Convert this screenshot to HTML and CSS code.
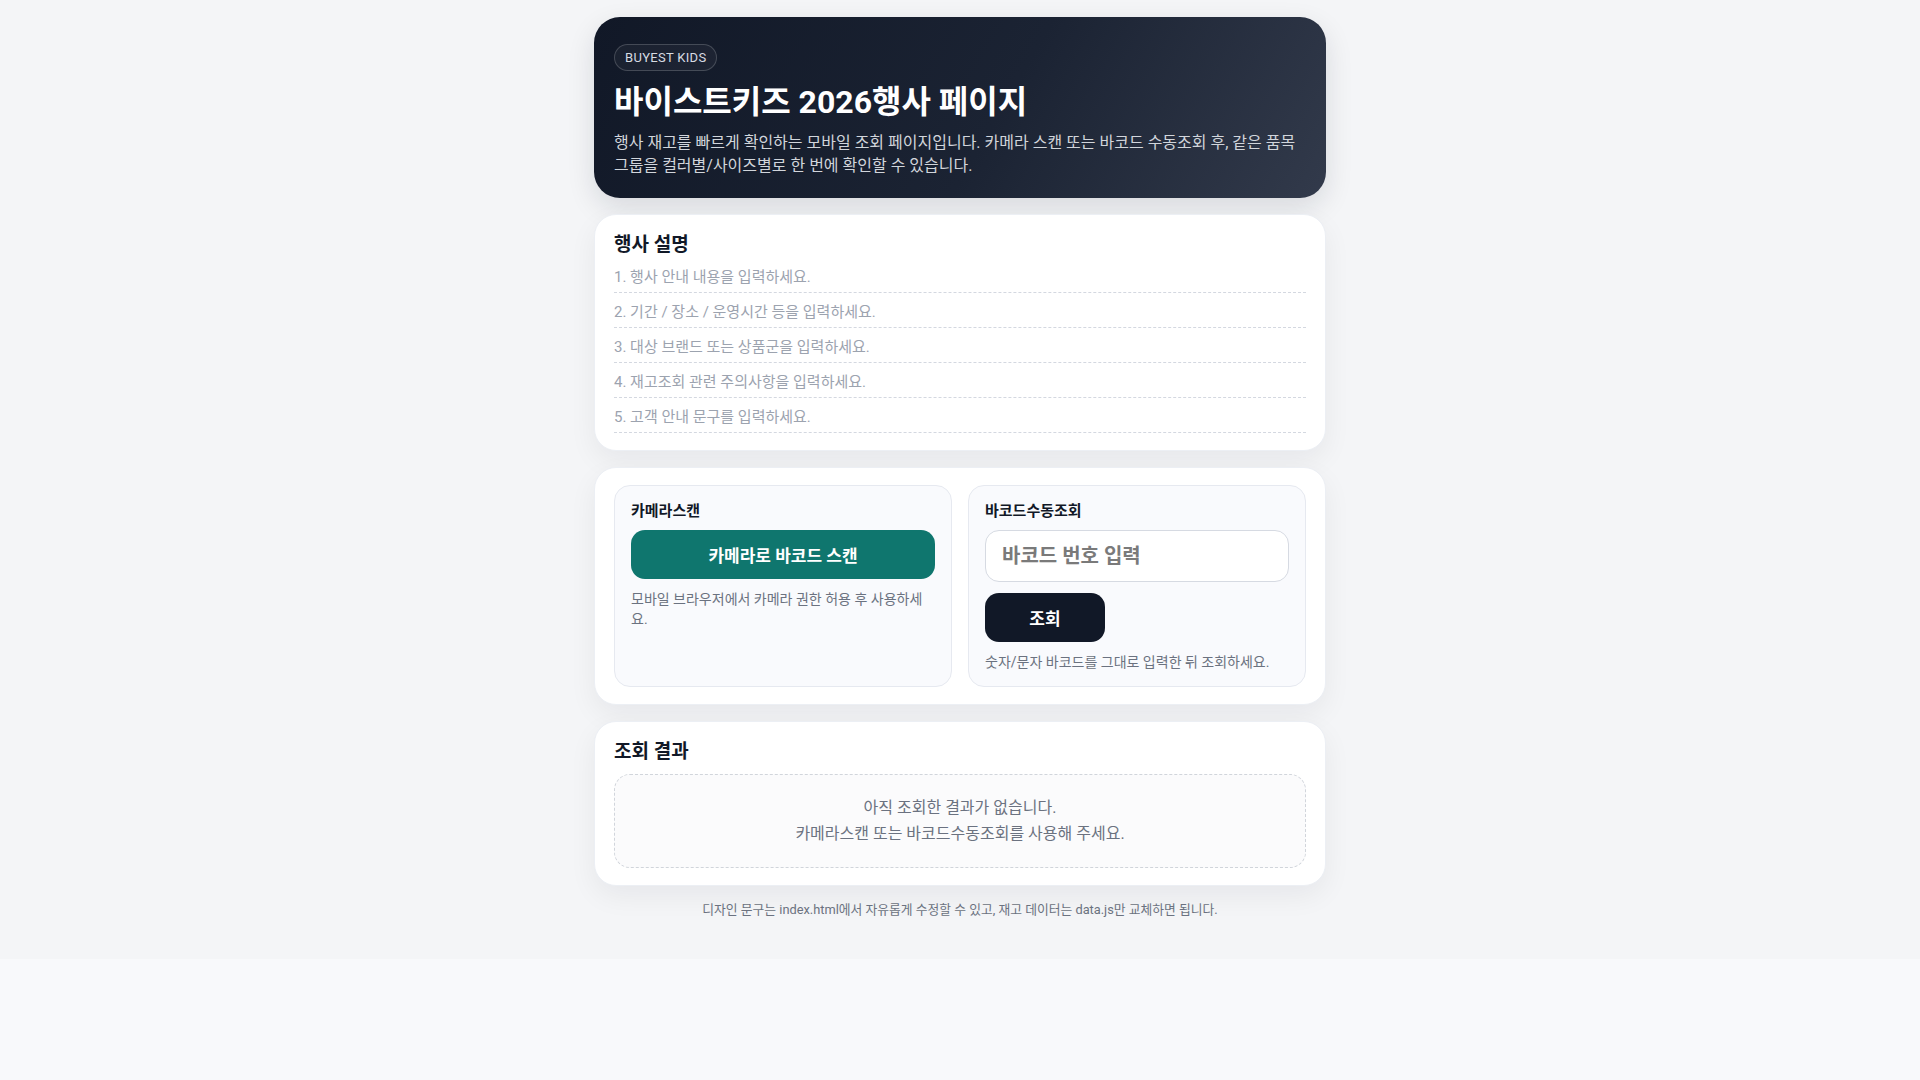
FILE: index.html
```html
<!DOCTYPE html>
<html lang="ko">
<head>
    <meta charset="UTF-8">
    <meta name="viewport" content="width=device-width, initial-scale=1.0">
    <title>바이스트키즈 2026행사 페이지</title>
    <link rel="stylesheet" href="styles.css">
</head>
<body>
    <div class="page">
        <header class="hero">
            <span class="badge">BUYEST KIDS</span>
            <h1>바이스트키즈 2026행사 페이지</h1>
            <p>행사 재고를 빠르게 확인하는 모바일 조회 페이지입니다. 카메라 스캔 또는 바코드 수동조회 후, 같은 품목 그룹을 컬러별/사이즈별로 한 번에 확인할 수 있습니다.</p>
        </header>

        <!-- 행사 설명 -->
        <section class="card">
            <h2>행사 설명</h2>
            <ul class="notice-list">
                <li>1. 행사 안내 내용을 입력하세요.</li>
                <li>2. 기간 / 장소 / 운영시간 등을 입력하세요.</li>
                <li>3. 대상 브랜드 또는 상품군을 입력하세요.</li>
                <li>4. 재고조회 관련 주의사항을 입력하세요.</li>
                <li>5. 고객 안내 문구를 입력하세요.</li>
            </ul>
        </section>

        <!-- 조회 방법 -->
        <section class="card">
            <div class="search-grid">
                <div class="panel">
                    <h3>카메라스캔</h3>
                    <button class="btn btn-scan" type="button">카메라로 바코드 스캔</button>
                    <p class="hint">모바일 브라우저에서 카메라 권한 허용 후 사용하세요.</p>
                </div>
                <div class="panel">
                    <h3>바코드수동조회</h3>
                    <input class="barcode-input" type="text" placeholder="바코드 번호 입력">
                    <button class="btn btn-search" type="button">조회</button>
                    <p class="hint">숫자/문자 바코드를 그대로 입력한 뒤 조회하세요.</p>
                </div>
            </div>
        </section>

        <!-- 조회 결과 -->
        <section class="card">
            <h2>조회 결과</h2>
            <div class="empty">
                아직 조회한 결과가 없습니다.<br>
                카메라스캔 또는 바코드수동조회를 사용해 주세요.
            </div>
        </section>

        <p class="footer">디자인 문구는 index.html에서 자유롭게 수정할 수 있고, 재고 데이터는 data.js만 교체하면 됩니다.</p>
    </div>
</body>
</html>
```

FILE: styles.css
```css
* {
    margin: 0;
    padding: 0;
    box-sizing: border-box;
}

html {
    background: #f8f9fb;
}

body {
    font-family: "Roboto", "Noto Sans CJK KR", sans-serif;
    background: #f4f5f7;
    color: #111827;
}

.page {
    max-width: 732px;
    margin: 0 auto;
    padding: 17px 0 40px;
    display: flex;
    flex-direction: column;
    gap: 16px;
}

/* Hero */
.hero {
    background: linear-gradient(120deg, #111827 0%, #1b2333 55%, #323a4b 100%);
    border-radius: 26px;
    padding: 27px 20px 21px;
    color: #fff;
    box-shadow: 0 10px 28px rgba(15, 23, 42, 0.12);
}

.badge {
    display: inline-block;
    font-size: 13px;
    line-height: 15px;
    letter-spacing: 0.3px;
    color: #d7dbe2;
    padding: 5px 10px;
    border: 1px solid rgba(255, 255, 255, 0.18);
    border-radius: 999px;
    background: rgba(255, 255, 255, 0.04);
}

.hero h1 {
    font-size: 32px;
    line-height: 38px;
    font-weight: 700;
    margin-top: 12px;
}

.hero p {
    font-size: 16px;
    line-height: 22.5px;
    color: #d1d5db;
    margin-top: 11px;
}

/* Cards */
.card {
    background: #fff;
    border: 1px solid #eceff4;
    border-radius: 22px;
    padding: 17px 19px;
    box-shadow: 0 10px 28px rgba(15, 23, 42, 0.06);
}

.card h2 {
    font-size: 19px;
    line-height: 26px;
    font-weight: 700;
    color: #111827;
    margin-bottom: 9px;
}

.notice-list {
    list-style: none;
}

.notice-list li {
    font-size: 15px;
    line-height: 20px;
    color: #9ca3af;
    padding: 9px 0 5px;
    border-bottom: 1px dashed #d4d8e0;
}

.notice-list li:first-child {
    padding-top: 0;
}

/* Search panels */
.search-grid {
    display: grid;
    grid-template-columns: 1fr 1fr;
    gap: 16px;
}

.panel {
    background: #f9fafd;
    border: 1px solid #e6e9f0;
    border-radius: 16px;
    padding: 15px 16px 14px;
    display: flex;
    flex-direction: column;
    align-items: flex-start;
}

.panel h3 {
    font-size: 15px;
    line-height: 20px;
    font-weight: 700;
    color: #111827;
    margin-bottom: 9px;
}

.btn {
    font-family: inherit;
    font-size: 17px;
    font-weight: 700;
    color: #fff;
    border: none;
    border-radius: 14px;
    height: 49px;
    cursor: pointer;
}

.btn-scan {
    width: 100%;
    background: #0f766e;
}

.btn-search {
    min-width: 120px;
    background: #111827;
}

.barcode-input {
    width: 100%;
    height: 52px;
    font-family: inherit;
    font-size: 20px;
    font-weight: 600;
    padding: 0 16px;
    border: 1px solid #d6dae2;
    border-radius: 14px;
    background: #fff;
    margin-bottom: 11px;
}

.barcode-input::placeholder {
    color: #7a7a7a;
}

.hint {
    font-size: 14px;
    line-height: 20px;
    color: #6b7280;
    margin-top: 10px;
}

/* Result */
.empty {
    border: 1px dashed #d1d5db;
    border-radius: 16px;
    background: #fbfbfc;
    padding: 20px;
    text-align: center;
    font-size: 16px;
    line-height: 26px;
    color: #6b7280;
}

.footer {
    text-align: center;
    font-size: 12.8px;
    line-height: 18px;
    color: #6b7280;
    margin-top: -1px;
}
```
